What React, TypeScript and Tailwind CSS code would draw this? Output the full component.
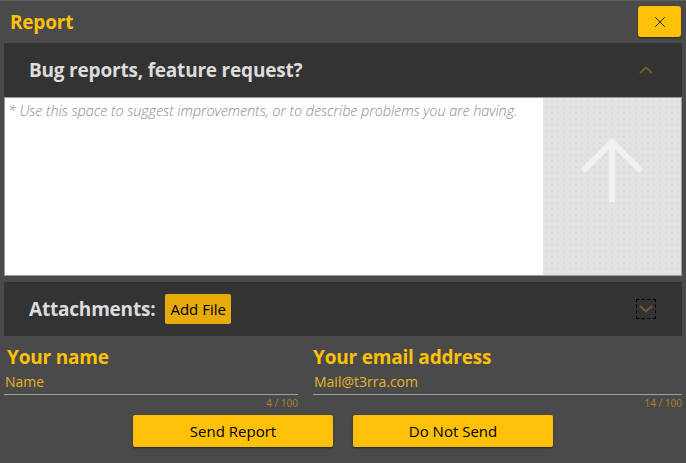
import { X } from "lucide-react";

const font = { fontFamily: '"Open Sans", "Noto Sans", sans-serif' };

const Chevron = ({ up }: { up?: boolean }) => (
  <svg width="14" height="8" viewBox="0 0 14 8" className="block">
    <path
      d={up ? "M1 7 L7 1.5 L13 7" : "M1 1 L7 6.5 L13 1"}
      fill="none"
      stroke="#6e5e2c"
      strokeWidth="2"
    />
  </svg>
);

const Field = ({ label, value, count, width, pad }: { label: string; value: string; count: string; width: string; pad: string }) => (
  <div className={`flex flex-col ${width}`}>
    <div className={`text-[19px] font-bold leading-[24px] text-[#ffc107] tracking-[-0.2px] ${pad}`}>{label}</div>
    <div className="mt-[2px] h-[24px] border-b border-[#a0a0a0] pl-[1px] text-[14px] leading-[22px] text-[#e6b422]">{value}</div>
    <div className="text-right text-[10px] leading-[17px] text-[#a8862e]">{count}</div>
  </div>
);

export default function App() {
  return (
    <div style={font} className="w-[686px] h-[463px] bg-[#4a4a4a] border-t border-[#5e5e5e] overflow-hidden flex flex-col">
      {/* Title bar */}
      <div className="h-[42px] flex items-start justify-between pl-[10px] pr-[5px]">
        <div className="mt-[9px] text-[19px] font-bold leading-[24px] text-[#ffc107] tracking-[-0.2px]">Report</div>
        <button className="mt-[5px] w-[43px] h-[31px] bg-[#ffc107] rounded-[3px] shadow-[0_1px_2px_rgba(0,0,0,0.5)] flex items-center justify-center">
          <X className="w-[18px] h-[18px] text-[#222]" strokeWidth={1.3} />
        </button>
      </div>

      <div className="px-[4px] flex flex-col">
        {/* Report panel */}
        <div className="h-[54px] bg-[#333333] flex items-center justify-between pl-[25px] pr-[29px]">
          <span className="text-[19px] font-bold text-[#dcdcdc] tracking-[-0.2px]">Bug reports, feature request?</span>
          <Chevron up />
        </div>
        <div className="h-[179px] flex bg-white border border-[#9a9a9a]">
          <div className="flex-1 px-[3px] pt-[3px] text-[14.5px] italic font-light text-[#8a8a8a] leading-[20px] tracking-[-0.1px]">
            * Use this space to suggest improvements, or to describe problems you are having.
          </div>
          <div className="w-[138px] bg-[#e3e3e3] bg-[radial-gradient(#d6d6d6_0.6px,transparent_0.9px)] bg-[length:6px_6px] flex items-start justify-center pt-[40px]">
            <svg width="66" height="66" viewBox="0 0 66 66">
              <path d="M33 64 V4 M4 33 L33 4 L62 33" fill="none" stroke="#f1f1f1" strokeWidth="6" />
            </svg>
          </div>
        </div>

        {/* Attachments panel */}
        <div className="mt-[6px] h-[54px] bg-[#333333] flex items-center pl-[25px] pr-[26px]">
          <span className="text-[19px] font-bold text-[#dcdcdc] tracking-[-0.2px]">Attachments:</span>
          <button className="ml-[10px] h-[30px] px-[5px] bg-[#e5ab0a] rounded-[2px] text-[15px] text-black leading-[30px]">
            Add File
          </button>
          <div className="ml-auto w-[20px] h-[20px] border border-dashed border-black flex items-center justify-center">
            <Chevron />
          </div>
        </div>

        {/* Fields */}
        <div className="mt-[9px] flex gap-[15px]">
          <Field label="Your name" value="Name" count="4 / 100" width="w-[294px]" pad="pl-[3px]" />
          <Field label="Your email address" value="Mail@t3rra.com" count="14 / 100" width="flex-1" pad="" />
        </div>

        {/* Actions */}
        <div className="mt-[3px] flex justify-center gap-[20px]">
          <button className="w-[200px] h-[32px] bg-[#ffc107] rounded-[2px] shadow-[0_1px_2px_rgba(0,0,0,0.5)] text-[15px] font-medium text-black">
            Send Report
          </button>
          <button className="w-[200px] h-[32px] bg-[#ffc107] rounded-[2px] shadow-[0_1px_2px_rgba(0,0,0,0.5)] text-[15px] font-medium text-black">
            Do Not Send
          </button>
        </div>
      </div>
    </div>
  );
}
